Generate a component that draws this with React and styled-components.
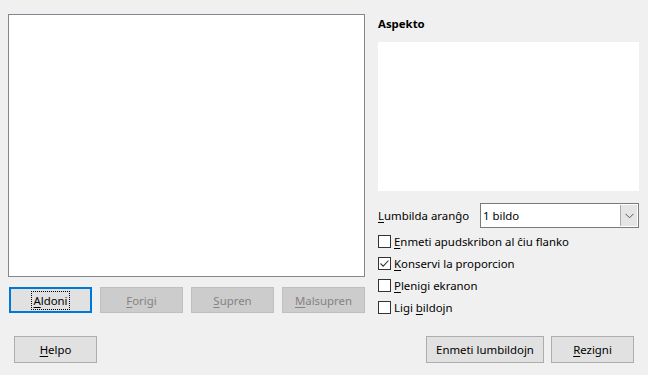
import React from 'react';
import styled, { createGlobalStyle } from 'styled-components';

const Global = createGlobalStyle`
  html, body {
    margin: 0;
    padding: 0;
    background: #f0f0f0;
  }
  body {
    font-family: 'Noto Sans', 'Open Sans', sans-serif;
    font-size: 11.4px;
    color: #000;
  }
`;

const Dialog = styled.div`
  width: 648px;
  height: 375px;
  box-sizing: border-box;
  padding: 14px 9px 0 8px;
  display: flex;
  flex-direction: column;
`;

const Main = styled.div`
  display: flex;
  gap: 13px;
`;

const LeftCol = styled.div`
  width: 357px;
  display: flex;
  flex-direction: column;
  gap: 10px;
`;

const ListBox = styled.div`
  height: 263px;
  box-sizing: border-box;
  background: #fff;
  border: 1px solid #828790;
`;

const ButtonRow = styled.div`
  display: flex;
  justify-content: space-between;
  padding-left: 1px;
`;

const Button = styled.button`
  width: ${p => p.$w || 83}px;
  height: ${p => p.$h || 26}px;
  box-sizing: border-box;
  font-family: inherit;
  font-size: 11.4px;
  padding: 0;
  background: ${p => (p.disabled ? '#cccccc' : '#e1e1e1')};
  color: ${p => (p.disabled ? '#838383' : '#000')};
  border: ${p => (p.$focused ? '2px solid #0078d7' : p.disabled ? '1px solid #bfbfbf' : '1px solid #adadad')};
  display: flex;
  align-items: center;
  justify-content: center;
`;

const Focus = styled.span`
  outline: 1px dotted #000;
  outline-offset: 0;
  padding: 1px 1px;
  line-height: 15px;
`;

const U = styled.span`
  text-decoration: underline;
  text-underline-offset: 2px;
`;

const RightCol = styled.div`
  width: 261px;
  display: flex;
  flex-direction: column;
`;

const Title = styled.div`
  font-weight: bold;
  height: 28px;
  padding-top: 2px;
  box-sizing: border-box;
  line-height: 16px;
`;

const Preview = styled.div`
  height: 149px;
  background: #fff;
`;

const ComboRow = styled.div`
  display: flex;
  align-items: center;
  margin-top: 12px;
  height: 25px;
`;

const Label = styled.div`
  width: 102px;
`;

const Combo = styled.div`
  flex: 1;
  height: 25px;
  box-sizing: border-box;
  border: 1px solid #7a7a7a;
  background: #fff;
  display: flex;
  align-items: center;
`;

const ComboText = styled.div`
  flex: 1;
  padding-left: 2px;
`;

const ComboArrow = styled.div`
  width: 16px;
  height: 21px;
  margin-right: 1px;
  background: #e5e5e5;
  border-left: 1px solid #acacac;
  display: flex;
  align-items: center;
  justify-content: center;
`;

const Checks = styled.div`
  display: flex;
  flex-direction: column;
  gap: 5px;
  margin-top: 5px;
`;

const CheckRow = styled.div`
  display: flex;
  align-items: center;
  height: 17px;
  gap: 3px;
`;

const Box = styled.div`
  width: 13px;
  height: 13px;
  box-sizing: border-box;
  border: 1px solid #333;
  background: #fff;
  display: flex;
  align-items: center;
  justify-content: center;
`;

const Bottom = styled.div`
  display: flex;
  align-items: center;
  margin-top: 20px;
  padding-left: 6px;
  padding-right: 5px;
`;

const Spacer = styled.div`
  flex: 1;
`;

const BottomRight = styled.div`
  display: flex;
  gap: 7px;
`;

const Check = ({ checked, children }) => (
  <CheckRow>
    <Box>
      {checked && (
        <svg width="11" height="11" viewBox="0 0 11 11">
          <path d="M1.5 5.5 L4.2 8.2 L9.5 2.5" fill="none" stroke="#333" strokeWidth="1.1" />
        </svg>
      )}
    </Box>
    <span>{children}</span>
  </CheckRow>
);

export default function App() {
  return (
    <>
      <Global />
      <Dialog>
        <Main>
          <LeftCol>
            <ListBox />
            <ButtonRow>
              <Button $focused $w={83}>
                <Focus><U>A</U>ldoni</Focus>
              </Button>
              <Button disabled><U>F</U>origi</Button>
              <Button disabled><U>S</U>upren</Button>
              <Button disabled><U>M</U>alsupren</Button>
            </ButtonRow>
          </LeftCol>
          <RightCol>
            <Title>Aspekto</Title>
            <Preview />
            <ComboRow>
              <Label><U>L</U>umbilda aranĝo</Label>
              <Combo>
                <ComboText>1 bildo</ComboText>
                <ComboArrow>
                  <svg width="9" height="6" viewBox="0 0 9 6">
                    <path d="M0.5 0.8 L4.5 4.8 L8.5 0.8" fill="none" stroke="#555" strokeWidth="1" />
                  </svg>
                </ComboArrow>
              </Combo>
            </ComboRow>
            <Checks>
              <Check><U>E</U>nmeti apudskribon al ĉiu flanko</Check>
              <Check checked><U>K</U>onservi la proporcion</Check>
              <Check><U>P</U>lenigi ekranon</Check>
              <Check>Ligi <U>b</U>ildojn</Check>
            </Checks>
          </RightCol>
        </Main>
        <Bottom>
          <Button $h={27}><U>H</U>elpo</Button>
          <Spacer />
          <BottomRight>
            <Button $w={118} $h={27}>Enmeti lumbildojn</Button>
            <Button $h={27}><U>R</U>ezigni</Button>
          </BottomRight>
        </Bottom>
      </Dialog>
    </>
  );
}
